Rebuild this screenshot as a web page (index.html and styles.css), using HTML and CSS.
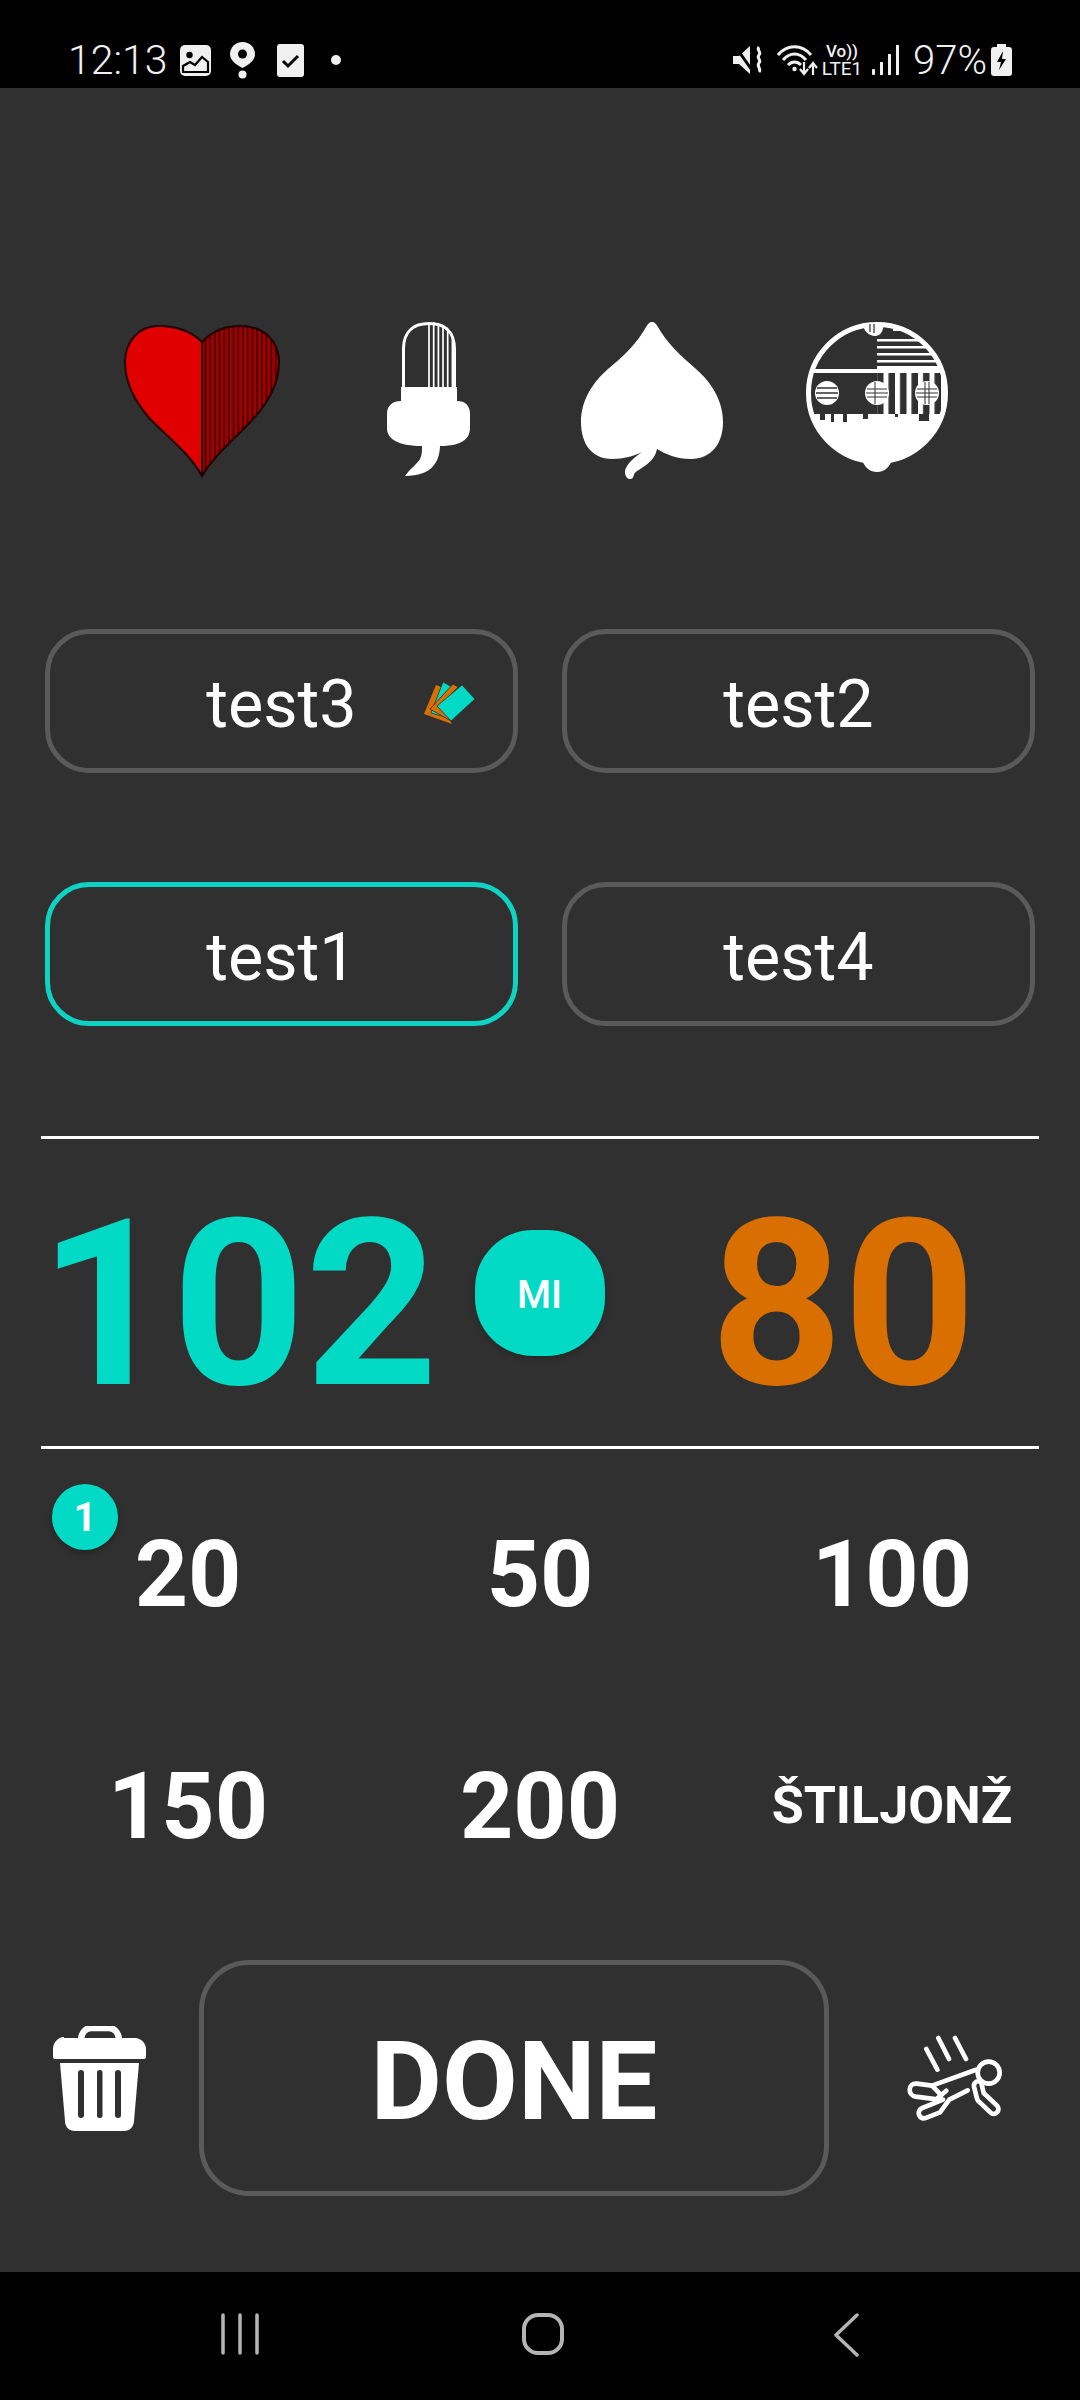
FILE: index.html
```html
<!DOCTYPE html>
<html lang="en">
<head>
<meta charset="utf-8">
<title>Score</title>
<link rel="stylesheet" href="styles.css">
</head>
<body>
<div class="phone">
  <header class="status">
    <span class="time">12:13</span>
    <svg class="si si-img" viewBox="0 0 31 31"><rect width="31" height="31" rx="5" fill="#f0f0f0"/><circle cx="9.500" cy="10" r="3.200" fill="#000"/><path d="M3 27V21l7-4 5 3 7-8 6 5v10z" fill="none" stroke="#000" stroke-width="2.200"/></svg>
    <svg class="si si-loc" viewBox="0 0 25 37"><path d="M12.500 0C5.500 0 0 5.500 0 12c0 6 5 10 12.500 14C20 22 25 18 25 12 25 5.500 19.500 0 12.500 0z" fill="#f0f0f0"/><circle cx="12.500" cy="12" r="4.500" fill="#000"/><circle cx="12.500" cy="32.500" r="4" fill="#f0f0f0"/></svg>
    <svg class="si si-chk" viewBox="0 0 27 33"><rect width="27" height="33" rx="3" fill="#f0f0f0"/><path d="M6 17l5 5 10-10" fill="none" stroke="#000" stroke-width="3"/></svg>
    <span class="sdot"></span>
    <div class="status-right">
      <svg class="si si-mute" viewBox="0 0 31 30"><path d="M0 11h6L17 1v28L6 19H0z" fill="#f0f0f0"/><path d="M2 1l19 27" stroke="#000" stroke-width="3"/><path d="M26 2c-3 3 3 5 0 8s3 5 0 8 3 6 0 9" fill="none" stroke="#f0f0f0" stroke-width="3"/></svg>
      <svg class="si si-wifi" viewBox="0 0 41 32"><g fill="none" stroke="#f0f0f0" stroke-width="3"><path d="M1 11C10 0 25 0 34 11"/><path d="M6 16C13 8 22 8 29 16"/><path d="M11 21C15 17 20 17 24 21"/></g><circle cx="17.500" cy="25" r="2.200" fill="#f0f0f0"/><path d="M27 18v11M23 25l4 5 4-5M36 31V20M32 24l4-5 4 5" fill="none" stroke="#f0f0f0" stroke-width="2.200"/></svg>
      <div class="volte"><span class="vo">Vo))</span><span class="lte">LTE1</span></div>
      <svg class="si si-sig" viewBox="0 0 27 30"><g fill="#f0f0f0"><rect x="0" y="24" width="3" height="6" rx="1"/><rect x="8" y="17" width="3" height="13"/><rect x="16" y="9" width="3" height="21"/><rect x="24" y="0" width="3" height="30"/></g></svg>
      <span class="pct">97%</span>
      <svg class="si si-bat" viewBox="0 0 21 32"><path d="M6 0h9v3h3a3 3 0 0 1 3 3v23a3 3 0 0 1-3 3H3a3 3 0 0 1-3-3V6a3 3 0 0 1 3-3h3z" fill="#f0f0f0"/><path d="M12 7l-6 11h4l-2 8 7-11h-4z" fill="#000"/></svg>
    </div>
  </header>

  <main class="game">
    <section class="suits">
      <svg class="suit" width="165" height="165" viewBox="0 0 165 165">
        <defs>
          <pattern id="hatch" width="4.700" height="10" patternUnits="userSpaceOnUse"><rect width="4.700" height="10" fill="#a00000"/><rect width="1.400" height="10" fill="#300000"/></pattern>
          <clipPath id="heartR"><rect x="82" y="0" width="83" height="165"/></clipPath>
        </defs>
        <path d="M82 23C70 11 55 7 38 7 18 7 5 24 5 43c0 22 12 42 25 57 20 20 40 35 52 57 13-22 33-37 51-57 14-15 26-35 26-57 0-19-13-36-39-36-15 0-28 5-38 16z" fill="#e00000"/>
        <path clip-path="url(#heartR)" d="M82 23C70 11 55 7 38 7 18 7 5 24 5 43c0 22 12 42 25 57 20 20 40 35 52 57 13-22 33-37 51-57 14-15 26-35 26-57 0-19-13-36-39-36-15 0-28 5-38 16z" fill="url(#hatch)"/>
        <path d="M82 23C70 11 55 7 38 7 18 7 5 24 5 43c0 22 12 42 25 57 20 20 40 35 52 57 13-22 33-37 51-57 14-15 26-35 26-57 0-19-13-36-39-36-15 0-28 5-38 16zM82 23v134" fill="none" stroke="#200000" stroke-width="2"/>
      </svg>
      <svg class="suit" width="92" height="165" viewBox="0 0 92 165">
        <defs><clipPath id="capR"><path d="M46 3h2c16 0 26 9 26 28v40H46z"/></clipPath></defs>
        <path d="M21.500 70V30C21.500 12 32 4.500 47 4.500S72.500 12 72.500 30v40" fill="none" stroke="#fff" stroke-width="3"/>
        <g clip-path="url(#capR)" stroke="#fff" stroke-width="1.700"><path d="M47 0v72M51.700 0v72M56.400 0v72M61 0v72M65.700 0v72M70.400 0v72"/></g>
        <path d="M19 68h56v14c8 0 13 4 13 13v14c0 12-10 18-30 18-.5 16-8 30-35 30 5-7 12-12 15-17 2-4 2-8 2-13-22 0-35-6-35-18V95c0-9 6-13 14-13z" fill="#fff"/>
      </svg>
      <svg class="suit" width="148" height="165" viewBox="0 0 148 165">
        <path d="M73 3c3 0 4 2 6 5 8 15 24 30 38 42 16 14 27 32 27 53 0 22-12 37-32 37-14 0-26-5-34-10-2 12-14 18-20 22-5 3-2 8-7 8-5 0-6-8-4-11 3-7 12-13 16-16-8 4-18 7-30 7-20 0-31-15-31-37 0-21 11-39 27-53C44 38 59 23 67 8c2-3 3-5 6-5z" fill="#fff"/>
      </svg>
      <svg class="suit" width="150" height="165" viewBox="0 0 150 165">
        <defs>
          <clipPath id="ballC"><circle cx="74" cy="74" r="69"/></clipPath>
          <pattern id="ballV" width="11.500" height="10" patternUnits="userSpaceOnUse"><rect width="5" height="10" fill="#fff"/></pattern>
        </defs>
        <circle cx="74" cy="74" r="68.500" fill="none" stroke="#fff" stroke-width="5"/>
        <g clip-path="url(#ballC)">
          <rect x="0" y="50" width="150" height="4" fill="#fff"/>
          <rect x="0" y="95" width="150" height="60" fill="#fff"/>
          <rect x="74" y="54" width="72" height="41" fill="url(#ballV)"/>
          <g fill="#fff"><rect x="74" y="20" width="72" height="2.500"/><rect x="74" y="27" width="72" height="2.500"/><rect x="74" y="34" width="72" height="2.500"/><rect x="74" y="41" width="72" height="2.500"/><rect x="74" y="47" width="72" height="3"/><rect x="90" y="9" width="30" height="3"/></g>
          <g fill="#303030"><rect x="40" y="95" width="4" height="8"/><rect x="28" y="95" width="3" height="8"/><rect x="17" y="95" width="5" height="6"/><rect x="60" y="95" width="5" height="5"/><rect x="92" y="95" width="3" height="3"/><rect x="116" y="95" width="10" height="7"/></g>
        </g>
        <circle cx="24" cy="74" r="12" fill="#fff"/>
        <path d="M14 69h20M13 74h22M14 79h20" stroke="#303030" stroke-width="1.500"/>
        <circle cx="74" cy="74" r="12" fill="#fff"/>
        <path d="M64 70h20M63 74h22M64 78h20M72 63v22" stroke="#303030" stroke-width="1"/>
        <circle cx="124" cy="74" r="12" fill="#fff"/>
        <path d="M114 70h20M113 74h22M114 78h20M122 63v22M126 63v22" stroke="#303030" stroke-width="1"/>
        <path d="M60 4c0 8 6 13 12 13s8-5 9-13z" fill="#fff"/>
        <path d="M67 5v8M71 5v9" stroke="#303030" stroke-width="1.200"/>
        <path d="M59 139c1 8 7 14 15 14s14-6 15-14z" fill="#fff"/>
      </svg>
    </section>

    <section class="players">
      <button class="player">test3
        <svg class="dealer" width="55" height="45" viewBox="0 0 55 45">
          <path d="M12 4l8 3-4 14 12 22L0 33z" fill="#d96f00"/>
          <path d="M19 1l9 5-10 9 13 24-24-7z" fill="#03dac5" stroke="#303030" stroke-width=".8"/>
          <path d="M29 3l5 3-17 18 10 16L6 28z" fill="#d96f00" stroke="#303030" stroke-width=".8"/>
          <path d="M38 4l13 14-24 22-14-15z" fill="#03dac5" stroke="#303030" stroke-width=".8"/>
        </svg>
      </button>
      <button class="player">test2</button>
      <button class="player active">test1</button>
      <button class="player">test4</button>
    </section>

    <section class="score">
      <span class="pts team-a">102</span>
      <span class="chip">MI</span>
      <span class="pts team-b">80</span>
    </section>

    <section class="bids">
      <span class="badge">1</span>
      <span class="bid">20</span>
      <span class="bid">50</span>
      <span class="bid">100</span>
      <span class="bid">150</span>
      <span class="bid">200</span>
      <span class="bid bid-word">ŠTILJONŽ</span>
    </section>

    <section class="actions">
      <svg class="trash" width="93" height="105" viewBox="0 0 93 105">
        <path d="M28 13c1-7 5-11 10-11h18c5 0 9 4 10 11" fill="none" stroke="#fff" stroke-width="6.500"/>
        <path d="M11 12h71c6 0 11 5 11 11v8c0 1-1 2-2 2H2c-1 0-2-1-2-2v-8c0-6 5-12 11-12zM7 37h79l-5 58c-.5 6-4 10-10 10H22c-6 0-10-4-10-10z" fill="#fff"/>
        <g fill="#303030"><rect x="25" y="44" width="6" height="48" rx="3"/><rect x="44" y="44" width="5.500" height="48" rx="2.500"/><rect x="62" y="44" width="6" height="48" rx="3"/></g>
      </svg>
      <button class="done">DONE</button>
      <svg class="fall" width="96" height="86" viewBox="140 165 288 258">
        <g fill="none" stroke="#fff" stroke-width="14" stroke-linecap="round" stroke-linejoin="round">
          <path d="M198 207l33 62M234 174l32 63M284 174l33 63"/>
          <circle cx="385" cy="278" r="33"/>
          <path d="M345 270l-130 47-45-6c-14-2-22 8-22 18s6 19 18 21l70 9 12 0-62 25c-10 4-13 14-9 22s12 11 22 7l40-16 28-38 55-28"/>
          <path d="M348 305c6-3 14 0 16 8l6 26 40 38c6 6 6 14 0 20s-14 6-20 0l-36-34c-3-3-4-7-5-11l-8-32c-1-6 2-12 7-15z"/>
          <path d="M218 320l25 26M258 332l-26 22"/>
        </g>
      </svg>
    </section>
  </main>

  <nav class="navbar">
    <svg class="nav-recent" width="38" height="42" viewBox="0 0 38 42"><path d="M2 2v38M19 2v38M36 2v38" stroke="#b4b4b4" stroke-width="3.500" stroke-linecap="round"/></svg>
    <svg class="nav-home" width="42" height="42" viewBox="0 0 42 42"><rect x="2" y="2" width="38" height="38" rx="14" fill="none" stroke="#b4b4b4" stroke-width="4"/></svg>
    <svg class="nav-back" width="26" height="44" viewBox="0 0 26 44"><path d="M24 2L3 22l21 20" fill="none" stroke="#b4b4b4" stroke-width="3.500" stroke-linecap="round" stroke-linejoin="round"/></svg>
  </nav>
</div>
</body>
</html>
```

FILE: styles.css
```css
* { box-sizing: border-box; }
html, body { margin: 0; padding: 0; background: #303030; }
body { font-family: Roboto, "Liberation Sans", sans-serif; color: #fff; }
button { font: inherit; color: inherit; background: none; padding: 0; }

.phone { width: 1080px; height: 2400px; display: flex; flex-direction: column; overflow: hidden; }

.status { height: 88px; flex: none; background: #000; color: #f0f0f0; display: flex; align-items: center; padding: 32px 68px 0 68px; }
.si { display: block; flex: none; }
.time { font-size: 41px; font-weight: 300; width: 112px; }
.si-img { width: 31px; height: 31px; }
.si-loc { width: 25px; height: 37px; margin-left: 19px; }
.si-chk { width: 27px; height: 33px; margin-left: 22px; }
.sdot { width: 10px; height: 10px; border-radius: 50%; background: #f0f0f0; margin-left: 27px; }
.status-right { margin-left: auto; display: flex; align-items: center; }
.si-mute { width: 31px; height: 30px; }
.si-wifi { width: 41px; height: 32px; margin-left: 13px; }
.volte { width: 40px; margin-left: 4px; display: flex; flex-direction: column; align-items: center; font-family: Roboto, sans-serif; }
.vo { font-size: 17px; line-height: 17px; font-weight: 500; }
.lte { font-size: 19px; line-height: 17px; }
.si-sig { width: 27px; height: 30px; margin-left: 10px; }
.pct { font-size: 40px; font-weight: 300; margin-left: 14px; width: 72px; white-space: nowrap; }
.si-bat { width: 21px; height: 32px; margin-left: 6px; }

.game { flex: 1; display: flex; flex-direction: column; background: #303030; }

.suits { display: grid; grid-template-columns: repeat(4, 225px); justify-items: center; align-items: center; padding: 0 90px; margin-top: 231px; height: 165px; }
.suit { display: block; }

.players { display: grid; grid-template-columns: 473px 473px; grid-auto-rows: 144px; column-gap: 44px; row-gap: 109px; padding: 0 45px; margin-top: 145px; }
.player { position: relative; border: 5px solid #5a5a5a; border-radius: 44px; font-size: 66.500px; font-weight: 400; display: flex; align-items: center; justify-content: center; padding-top: 6px; }
.player.active { border-color: #0fd3c2; }
.dealer { position: absolute; right: 34px; top: 47px; }

.score { margin: 110px 41px 0 41px; border-top: 3px solid #fff; border-bottom: 3px solid #fff; height: 313px; display: grid; grid-template-columns: 430px 166px 438px; align-items: center; }
.pts { font-size: 232px; font-weight: 700; line-height: 1; text-align: center; padding-top: 24px; }
.team-a { color: #03dac5; margin-left: -35px; }
.team-b { color: #d96f00; margin-left: -26px; }
.chip { width: 130px; height: 126px; border-radius: 58px; background: #03dac5; display: flex; align-items: center; justify-content: center; font-size: 39px; font-weight: 500; justify-self: center; margin-left: -29px; padding-top: 4px; box-shadow: 0 3px 6px rgba(0,0,0,.2); }

.bids { position: relative; display: grid; grid-template-columns: repeat(3, 352px); grid-auto-rows: 232px; padding: 9px 12px 0; justify-items: center; align-items: center; }
.bid { font-size: 93px; font-weight: 700; line-height: 1; }
.bid-word { font-size: 52px; }
.badge { position: absolute; left: 52px; top: 35px; width: 66px; height: 66px; border-radius: 50%; background: #03dac5; display: flex; align-items: center; justify-content: center; font-size: 40px; font-weight: 700; box-shadow: 0 3px 6px rgba(0,0,0,.25); }

.actions { display: flex; align-items: center; padding-left: 53px; margin-top: 38px; }
.trash { display: block; flex: none; }
.done { flex: none; width: 630px; height: 236px; margin-left: 53px; border: 5px solid #5a5a5a; border-radius: 50px; font-size: 110px; font-weight: 700; padding-top: 6px; }
.fall { display: block; flex: none; margin-left: 78px; }

.navbar { height: 128px; flex: none; background: #000; position: relative; }
.nav-recent, .nav-home, .nav-back { position: absolute; top: 41px; }
.nav-recent { left: 221px; }
.nav-home { left: 522px; }
.nav-back { left: 833px; }
```
